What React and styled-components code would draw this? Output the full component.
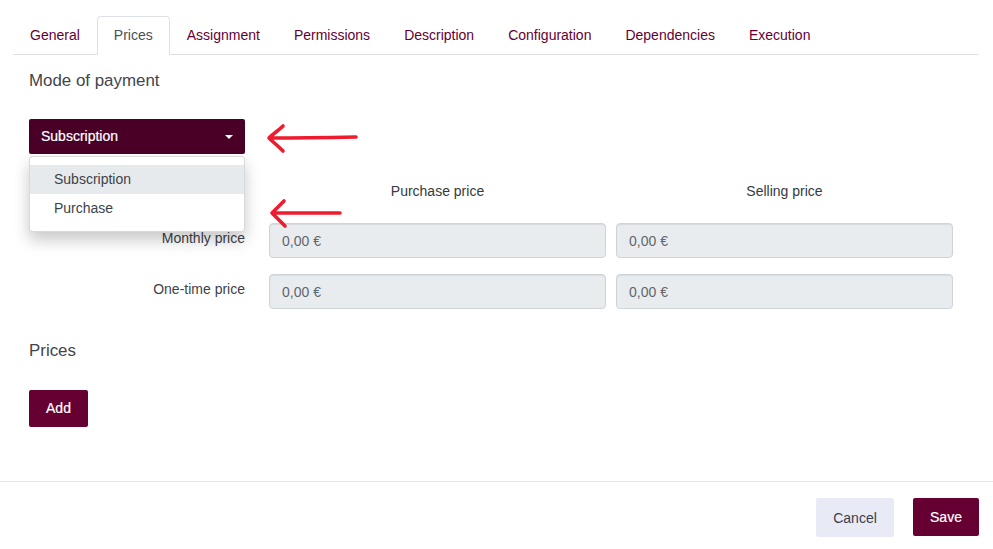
import React from "react";
import styled, { createGlobalStyle } from "styled-components";

const Global = createGlobalStyle`
  html, body { margin: 0; padding: 0; background: #fff; }
  body { font-family: "Liberation Sans", Arial, sans-serif; font-size: 14px; color: #343a40; }
  * { box-sizing: border-box; }
`;

const Page = styled.div`
  position: relative;
  width: 993px;
  height: 549px;
  overflow: hidden;
  display: flex;
  flex-direction: column;
`;
const Body = styled.div`
  height: 481px;
  padding: 16px 15px 0 13px;
`;
const Tabs = styled.div`
  display: flex;
  height: 39px;
  border-bottom: 1px solid #dee2e6;
`;
const Tab = styled.div`
  height: 39px;
  padding: 0 16px 2px;
  display: flex;
  align-items: center;
  color: ${p => (p.$active ? "#495057" : "#660033")};
  border: 1px solid ${p => (p.$active ? "#dee2e6" : "transparent")};
  border-bottom-color: ${p => (p.$active ? "#fff" : "transparent")};
  border-radius: 4px 4px 0 0;
  background: ${p => (p.$active ? "#fff" : "transparent")};
`;
const Content = styled.div`
  padding: 16px 0 0 16px;
`;
const Heading = styled.div`
  font-size: 16.9px;
  line-height: 19px;
  color: #3f454b;
`;
const DropWrap = styled.div`
  position: relative;
  width: 216px;
  margin-top: 29px;
`;
const DropButton = styled.div`
  height: 35px;
  background: #4a0026;
  color: #fff;
  border-radius: 2px;
  padding: 0 12px 2px;
  display: flex;
  align-items: center;
  justify-content: space-between;
  -webkit-text-stroke: 0.2px #fff;
`;
const Caret = styled.span`
  width: 0;
  height: 0;
  margin-top: 2px;
  border-left: 4px solid transparent;
  border-right: 4px solid transparent;
  border-top: 4px solid #fff;
`;
const Menu = styled.div`
  position: absolute;
  z-index: 2;
  left: 0;
  top: 37px;
  width: 216px;
  height: 76px;
  padding: 8px 0;
  background: #fff;
  border: 1px solid rgba(0, 0, 0, 0.15);
  border-radius: 4px;
  box-shadow: 0 8px 16px rgba(0, 0, 0, 0.22);
`;
const MenuItem = styled.div`
  height: 29px;
  padding: 0 24px 2px;
  display: flex;
  align-items: center;
  color: #3c4249;
  background: ${p => (p.$active ? "#e7eaed" : "transparent")};
`;
const PriceGrid = styled.div`
  display: grid;
  grid-template-columns: 216px 24px 337px 10px 337px;
  grid-template-rows: 26px 35px 35px;
  row-gap: 16px;
  margin-top: 27px;
`;
const ColHead = styled.div`
  grid-column: ${p => p.$col};
  text-align: center;
  line-height: 20px;
  color: #343a40;
`;
const RowLabel = styled.div`
  grid-column: 1;
  text-align: right;
  line-height: 30px;
  color: #3c4249;
`;
const AmountLabel = styled.div`
  grid-column: 1;
  line-height: 20px;
`;
const Field = styled.div`
  grid-column: ${p => p.$col};
  height: 35px;
  background: #e9ecef;
  border: 1px solid #ced4da;
  border-radius: 4px;
  box-shadow: inset 0 1px 1px rgba(0, 0, 0, 0.075);
  padding: 0 12px;
  display: flex;
  align-items: center;
  color: #5f666d;
`;
const PricesHeading = styled(Heading)`
  margin-top: 32px;
`;
const PrimaryButton = styled.div`
  display: inline-flex;
  align-items: center;
  justify-content: center;
  width: ${p => p.$w}px;
  height: ${p => p.$h}px;
  padding-bottom: ${p => p.$lift || 0}px;
  background: #660033;
  color: #fff;
  border-radius: 2px;
  -webkit-text-stroke: 0.2px #fff;
`;
const AddRow = styled.div`
  margin-top: 30px;
`;
const Footer = styled.div`
  border-top: 1px solid #e3e3e3;
  height: 68px;
  padding: 16px 14px 0 0;
  display: flex;
  justify-content: flex-end;
  align-items: flex-start;
  gap: 19px;
`;
const CancelButton = styled.div`
  width: 78px;
  height: 39px;
  display: flex;
  align-items: center;
  justify-content: center;
  background: #e8eaf6;
  color: #3a3f4a;
  border-radius: 2px;
`;
const Arrow = styled.svg`
  position: absolute;
  z-index: 3;
  left: ${p => p.$x}px;
  top: ${p => p.$y}px;
  overflow: visible;
`;

const tabs = ["General", "Prices", "Assignment", "Permissions", "Description", "Configuration", "Dependencies", "Execution"];

export default function App() {
  return (
    <Page>
      <Global />
      <Body>
        <Tabs>
          {tabs.map(t => (
            <Tab key={t} $active={t === "Prices"}>{t}</Tab>
          ))}
        </Tabs>
        <Content>
          <Heading>Mode of payment</Heading>
          <DropWrap>
            <DropButton>Subscription<Caret /></DropButton>
            <Menu>
              <MenuItem $active>Subscription</MenuItem>
              <MenuItem>Purchase</MenuItem>
            </Menu>
          </DropWrap>
          <PriceGrid>
            <AmountLabel>Amount</AmountLabel>
            <ColHead $col={3}>Purchase price</ColHead>
            <ColHead $col={5}>Selling price</ColHead>
            <RowLabel>Monthly price</RowLabel>
            <Field $col={3}>0,00 €</Field>
            <Field $col={5}>0,00 €</Field>
            <RowLabel>One-time price</RowLabel>
            <Field $col={3}>0,00 €</Field>
            <Field $col={5}>0,00 €</Field>
          </PriceGrid>
          <PricesHeading>Prices</PricesHeading>
          <AddRow><PrimaryButton $w={59} $h={37} $lift={1}>Add</PrimaryButton></AddRow>
        </Content>
      </Body>
      <Footer>
        <CancelButton>Cancel</CancelButton>
        <PrimaryButton $w={66} $h={38}>Save</PrimaryButton>
      </Footer>
      <Arrow $x={266} $y={124} width="92" height="30" viewBox="0 0 92 30">
        <path d="M90 13 C65 13.5 30 14 4 14 M17 2 C13 6 7 10 3 14 C7 18 12 22 17 27" fill="none" stroke="#ed1c2e" strokeWidth="3.6" strokeLinecap="round" strokeLinejoin="round" />
      </Arrow>
      <Arrow $x={269} $y={199} width="74" height="30" viewBox="0 0 74 30">
        <path d="M71 14 C50 14 25 14 3 14 M15 2 C11 6 7 10 3 14 C7 18 12 23 16 27" fill="none" stroke="#ed1c2e" strokeWidth="3.6" strokeLinecap="round" strokeLinejoin="round" />
      </Arrow>
    </Page>
  );
}
